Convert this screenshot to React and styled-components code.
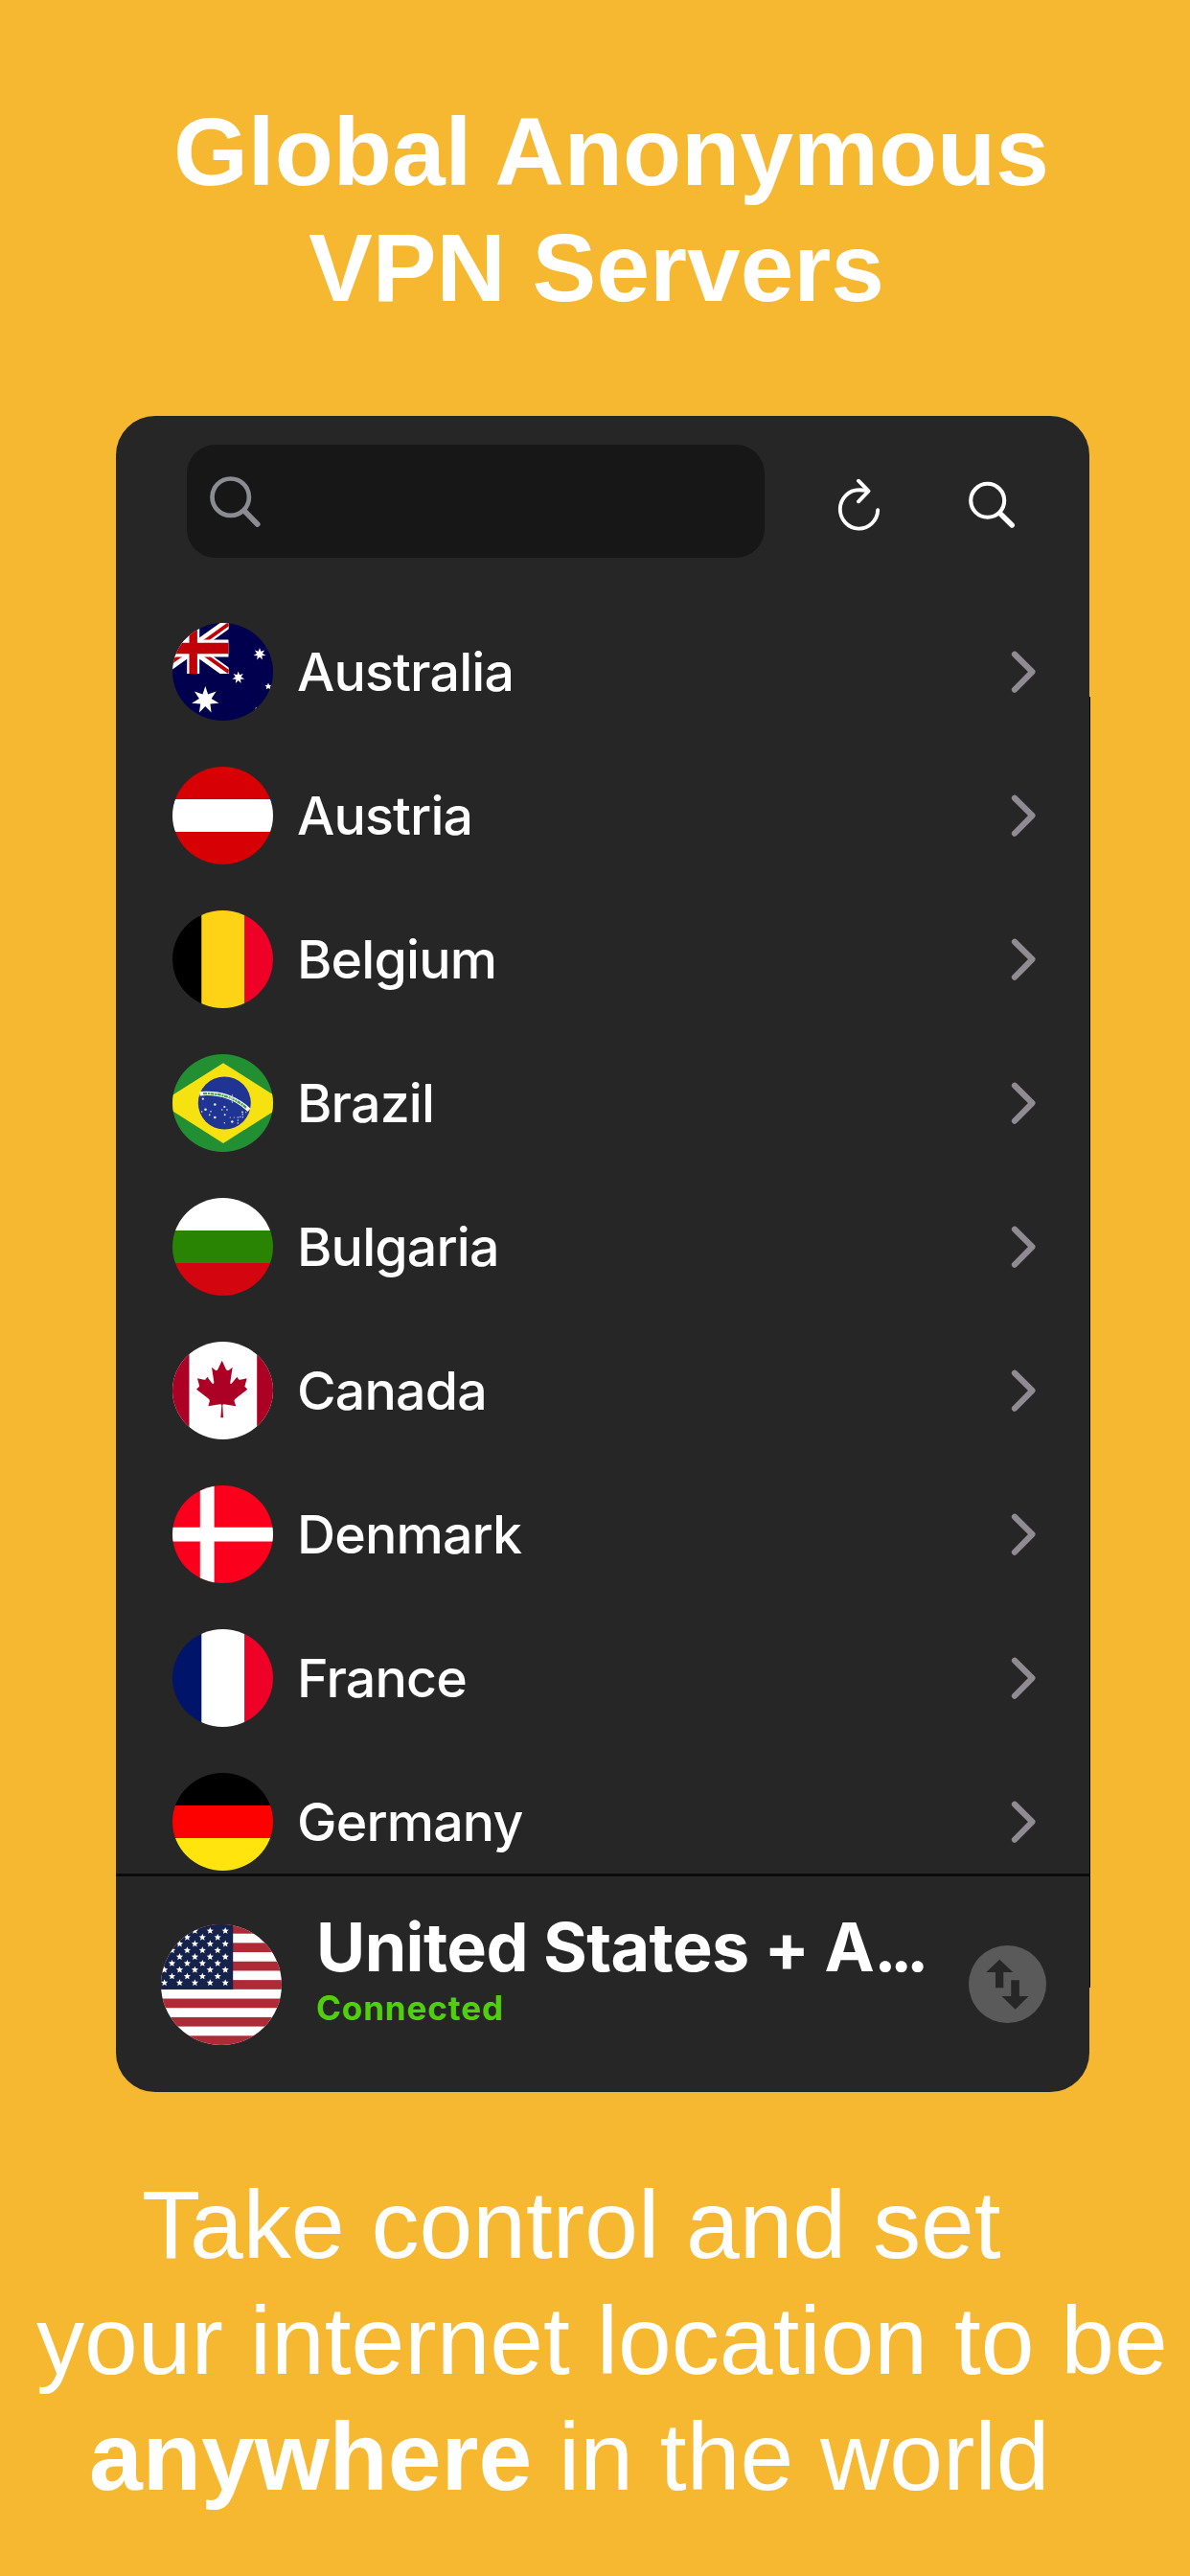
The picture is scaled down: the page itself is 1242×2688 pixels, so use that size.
import React from 'react'
import styled, { createGlobalStyle } from 'styled-components'

const starPoints = (cx, cy, outer, inner, tips) => {
    const points = []
    for (let i = 0; i < tips * 2; i++) {
        const r = i % 2 ? inner : outer
        const angle = (Math.PI * i) / tips - Math.PI / 2
        points.push(`${(cx + r * Math.cos(angle)).toFixed(2)},${(cy + r * Math.sin(angle)).toFixed(2)}`)
    }
    return points.join(' ')
}

const Star = ({ x, y, r, inner = 0.45, tips = 7 }) => (
    <polygon points={starPoints(x, y, r, r * inner, tips)} fill="#fff" />
)

const Australia = () => (
    <>
        <rect width="105" height="102" fill="#00004f" />
        <svg x="-15.3" width="74" height="53" viewBox="0 0 74 53">
            <path d="M0 0 74 53M74 0 0 53" stroke="#fff" strokeWidth="10.5" />
            <path d="M37 26.5 74 53" stroke="#c00006" strokeWidth="3.8" transform="translate(0 -1.8)" />
            <path d="M37 26.5 0 53" stroke="#c00006" strokeWidth="3.8" transform="translate(0 -1.8)" />
            <path d="M37 26.5 74 0" stroke="#c00006" strokeWidth="3.8" transform="translate(0 1.2)" />
            <path d="M37 0V53" stroke="#fff" strokeWidth="13" />
            <path d="M0 26.5H74" stroke="#fff" strokeWidth="18" />
            <path d="M37 0V53" stroke="#c00006" strokeWidth="8.4" />
            <path d="M0 26.5H74" stroke="#c00006" strokeWidth="11.4" />
        </svg>
        <Star x={34.3} y={80.5} r={14.5} />
        <Star x={91} y={32.5} r={6.6} />
        <Star x={68.7} y={57} r={6.6} />
        <Star x={100} y={66.3} r={3.8} tips={5} />
        <Star x={87.3} y={89.3} r={1.2} />
    </>
)

const HorizontalStripes = ({ colors }) => colors.map((color, i) => (
    <rect key={i} y={i * 34} width="105" height="34" fill={color} />
))

const VerticalStripes = ({ colors }) => (
    <>
        <rect width="30.3" height="102" fill={colors[0]} />
        <rect x="30.3" width="45" height="102" fill={colors[1]} />
        <rect x="75.3" width="29.7" height="102" fill={colors[2]} />
    </>
)

const brazilStars = [
    [31.8, 46.7, 1.1], [44.3, 52.5, 1.3], [34.5, 57.7, 1.3], [30.7, 60, 0.8], [40, 59.7, 0.8],
    [38.7, 63.3, 0.9], [44.3, 66, 1.3], [54.3, 55, 1.1], [51.7, 58, 0.8], [57, 58, 0.8],
    [54.7, 63.3, 1], [54.3, 71.7, 0.7], [60.3, 66, 0.6], [62.3, 70.5, 1.3], [64.3, 66, 0.6],
    [68.3, 66, 0.7], [68.3, 69, 0.7], [68.3, 72, 0.7], [70.7, 65.5, 0.7], [73.3, 65.7, 0.7],
    [73, 60.5, 0.9], [73.3, 63, 0.8], [76.7, 60.7, 0.6],
]

const Brazil = () => (
    <>
        <rect width="105" height="102" fill="#228f33" />
        <path d="M53 9.2 119 51 53 93-13 51Z" fill="#f6e211" />
        <circle cx="54.3" cy="51" r="27.5" fill="#1f3493" />
        <path d="M28.5 41.2Q59 38.5 80 58.3" fill="none" stroke="#fff" strokeWidth="4.4" />
        <path d="M32 41.2Q58 40 77 55.8" fill="none" stroke="#46a055" strokeWidth="2.3" strokeDasharray="4 .8 2 .6" />
        <path d="M62.3 42V51M59 46H66" stroke="#cfd8e8" strokeWidth=".8" />
        {brazilStars.map(([x, y, r], i) => <circle key={i} cx={x} cy={y} r={r} fill="#e6e9f5" />)}
    </>
)

const Canada = () => (
    <>
        <rect width="105" height="102" fill="#fff" />
        <rect width="17.5" height="102" fill="#ac0024" />
        <rect x="88.2" width="17" height="102" fill="#ac0024" />
        <path
            transform="scale(.3333)"
            fill="#ac0024"
            d="M155 59 142 87Q140 92 134 89L123 80 130 127Q130 136 123 129L109 110 105 116Q104 120 99 119L78 115 84 137Q86 141 81 143L75 149 112 178Q118 183 116 188L112 202 150 196Q154 196 154 200L151 238H159L157 200Q157 196 161 196L199 202 194 188Q192 183 198 178L235 149 229 143Q225 141 227 137L233 115 212 119Q207 120 206 116L202 110 187 129Q180 136 181 127L188 80 177 89Q171 92 168 87Z"
        />
    </>
)

const Denmark = () => (
    <>
        <rect width="105" height="102" fill="#fa001c" />
        <path d="M36.2 0V102M0 51.2H105" stroke="#fff" strokeWidth="14.8" />
    </>
)

const usStars = []
for (let row = 0; row < 9; row++) {
    for (let col = 0; col < 5; col++) {
        usStars.push({ x: (row % 2 ? 59.2 : 67.2) - col * 15.9, y: 6.8 + row * 6.78 })
    }
}

const UnitedStates = () => (
    <svg width="126" height="126" viewBox="0 0 126 126">
        <clipPath id="us"><circle cx="63" cy="63" r="63" /></clipPath>
        <g clipPath="url(#us)">
            <rect width="126" height="126" fill="#fff" />
            {[0, 2, 4, 6, 8, 10, 12].map(i => (
                <rect key={i} y={i * 9.69} width="126" height="9.69" fill="#ae2a36" />
            ))}
            <rect width="75.2" height="67.9" fill="#15224b" />
            {usStars.map((star, i) => <Star key={i} {...star} r={3.8} tips={5} />)}
        </g>
    </svg>
)

const countries = [
    { name: 'Australia', flag: <Australia /> },
    { name: 'Austria', flag: <HorizontalStripes colors={['#d60005', '#fff', '#d60005']} /> },
    { name: 'Belgium', flag: <VerticalStripes colors={['#000', '#fed215', '#ef0027']} /> },
    { name: 'Brazil', flag: <Brazil /> },
    { name: 'Bulgaria', flag: <HorizontalStripes colors={['#fff', '#2a8404', '#d3060f']} /> },
    { name: 'Canada', flag: <Canada /> },
    { name: 'Denmark', flag: <Denmark /> },
    { name: 'France', flag: <VerticalStripes colors={['#00156a', '#fff', '#ef0027']} /> },
    { name: 'Germany', flag: <HorizontalStripes colors={['#000', '#fd0000', '#ffe40e']} /> },
]

const SearchIcon = () => (
    <svg width="54" height="54" viewBox="0 0 54 54" fill="none" stroke="currentColor" strokeLinecap="round">
        <circle cx="22.7" cy="22.7" r="19.2" strokeWidth="4.7" />
        <path d="M37.5 37.5 50.7 51" strokeWidth="5.8" />
    </svg>
)

const ToolbarSearchIcon = () => (
    <svg width="50" height="50" viewBox="0 0 50 50" fill="none" stroke="currentColor" strokeLinecap="round">
        <circle cx="20.7" cy="20.3" r="17.5" strokeWidth="4.1" />
        <path d="M34.3 34.3 46.2 46" strokeWidth="5.4" />
    </svg>
)

const ReloadIcon = () => (
    <svg width="46" height="56" viewBox="0 0 46 56" fill="none" stroke="currentColor" strokeWidth="3.9" strokeLinecap="round" strokeLinejoin="round">
        <path d="M42.2 33.2A19.7 20.2 0 1 1 22.5 12.2Q27 12.2 31.5 13.2" />
        <path d="M22 2.7 32.5 13.3 22 24.3" />
    </svg>
)

const Chevron = () => (
    <svg width="26" height="46" viewBox="0 0 26 46" fill="none" stroke="#8f8b92" strokeWidth="6.2" strokeLinecap="round" strokeLinejoin="round">
        <path d="M4 4.7 22.4 23 4 41.7" />
    </svg>
)

function App() {
    return (
        <Page>
            <GlobalStyle />
            <Heading>
                <Line $start={181}>Global Anonymous</Line>
                <Line $start={322}>VPN Servers</Line>
            </Heading>
            <Card>
                <Toolbar>
                    <SearchBox><SearchIcon /></SearchBox>
                    <ReloadButton><ReloadIcon /></ReloadButton>
                    <SearchButton><ToolbarSearchIcon /></SearchButton>
                </Toolbar>
                <List>
                    {countries.map(({ name, flag }) => (
                        <Row key={name}>
                            <svg width="105" height="102" viewBox="0 0 105 102">
                                <clipPath id={name}><ellipse cx="52.5" cy="51" rx="52.5" ry="51" /></clipPath>
                                <g clipPath={`url(#${name})`}>{flag}</g>
                            </svg>
                            <Name>{name}</Name>
                            <Chevron />
                        </Row>
                    ))}
                </List>
                <Footer>
                    <UnitedStates />
                    <Connection>
                        <Location>United States + A<Dots>...</Dots></Location>
                        <Status>Connected</Status>
                    </Connection>
                    <SwapButton>
                        <svg width="81" height="81" viewBox="0 0 81 81" fill="#262626">
                            <path d="M32.2 14.7 46.3 28H36.3V44.3H28V28H18.4Z" />
                            <path d="M44.3 36.3H52.9V53H62.5L48.7 66.7 34.5 53H44.3Z" />
                        </svg>
                    </SwapButton>
                </Footer>
            </Card>
            <Tagline>
                <Line $start={148}>Take control and set</Line>
                <Line $start={38}>your internet location to be</Line>
                <Line $start={93}><strong>anywhere</strong> in the world</Line>
            </Tagline>
        </Page>
    )
}

export default App

const GlobalStyle = createGlobalStyle`
    * {
        box-sizing: border-box;
    }

    body {
        margin: 0;
        background: #f6b831;
    }

    svg {
        display: block;
        flex: none;
    }
`

const Page = styled.div`
    width: 1242px;
    height: 2688px;
    overflow: hidden;
    background: #f6b831;
    display: flex;
    flex-direction: column;
    color: #fff;
`

const Heading = styled.h1`
    margin: 0;
    padding-top: 98px;
    height: 434px;
    flex: none;
    font: bold 100.1px/121px "Liberation Sans", Arial, sans-serif;
`

const Tagline = styled.p`
    margin: 78px 0 0;
    font: 100.2px/121px "Liberation Sans", Arial, sans-serif;
`

const Line = styled.span`
    display: block;
    padding-left: ${props => props.$start}px;
    white-space: nowrap;
`

const Card = styled.main`
    position: relative;
    display: flex;
    flex-direction: column;
    flex: none;
    width: 1016px;
    height: 1749px;
    margin-left: 121px;
    border-radius: 41px;
    background: #262626;
    font-family: Inter, "Liberation Sans", sans-serif;

    &::after {
        content: "";
        position: absolute;
        left: 100%;
        top: 293px;
        width: 1px;
        height: 1347px;
        background: #000;
    }
`

const Toolbar = styled.div`
    display: flex;
    align-items: flex-start;
    height: 192px;
    padding: 30px 0 0 74px;
    flex: none;
`

const SearchBox = styled.div`
    width: 603px;
    height: 118px;
    border-radius: 30px;
    background: #171717;
    color: #8b8b92;
    padding: 32px 0 0 23px;
`

const ReloadButton = styled.button`
    margin: 35px 0 0 76px;
    padding: 0;
    border: 0;
    background: none;
    color: #fff;
`

const SearchButton = styled(ReloadButton)`
    margin: 38px 0 0 90px;
`

const List = styled.div`
    flex: 1;
    min-height: 0;
    overflow: hidden;
`

const Row = styled.div`
    display: flex;
    align-items: center;
    height: 150px;
    padding: 0 56px 0 59px;
`

const Name = styled.div`
    flex: 1;
    margin-left: 25px;
    font-size: 55.5px;
    font-weight: 500;
    line-height: 80px;
    letter-spacing: -0.85px;
`

const Footer = styled.footer`
    display: flex;
    flex: none;
    height: 228px;
    padding: 50px 0 0 47px;
    border-top: 3px solid #0b0b0b;
`

const Connection = styled.div`
    width: 681px;
    margin-left: 36px;
`

const Location = styled.div`
    margin-top: -16px;
    font-size: 70px;
    font-weight: 700;
    line-height: 80px;
    letter-spacing: -0.6px;
    white-space: nowrap;
`

const Dots = styled.span`
    letter-spacing: -6.5px;
`

const Status = styled.div`
    font-size: 35px;
    font-weight: 700;
    line-height: 46px;
    letter-spacing: 0.9px;
    color: #51cf0e;
`

const SwapButton = styled.button`
    width: 81px;
    height: 81px;
    margin: 22px 0 0;
    padding: 0;
    border: 0;
    border-radius: 50%;
    background: #5a5a5a;
`
